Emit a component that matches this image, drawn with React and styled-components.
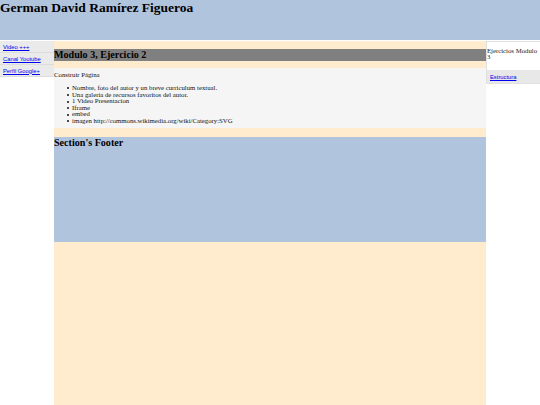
import React from 'react';
import styled, { createGlobalStyle } from 'styled-components';

const GlobalStyle = createGlobalStyle`
  html, body {
    margin: 0;
    padding: 0;
    background: #ffffff;
    font-family: "Liberation Serif", "Times New Roman", serif;
    color: #000;
  }
`;

const Header = styled.header`
  height: 40px;
  background-color: #b0c4de;
  margin-bottom: 1px;

  h1 {
    margin: 0;
    font-size: 13.5px;
    line-height: 16px;
    font-weight: bold;
  }
`;

const Layout = styled.div`
  display: flex;
  align-items: flex-start;
`;

const Nav = styled.nav`
  width: 54px;
  flex-shrink: 0;
  background-color: #eaeaea;
  display: flex;
  flex-direction: column;
`;

const NavItem = styled.div`
  height: 11px;
  display: flex;
  align-items: center;
  padding-left: 3px;
  border-bottom: 1px solid #dcdcdc;
  font-family: "Liberation Sans", Arial, sans-serif;
  font-size: 5.8px;

  a {
    color: #0000ee;
  }
`;

const Main = styled.main`
  width: 432px;
  flex-shrink: 0;
  min-height: 364px;
  background-color: #ffebcd;
  padding: 1px 0 0;
  box-sizing: border-box;
`;

const SectionTitle = styled.h2`
  margin: 7px 0;
  background-color: #808080;
  font-size: 10.1px;
  line-height: 11.5px;
`;

const Article = styled.article`
  background-color: #f5f5f5;
  font-size: 6.75px;
  line-height: 7.7px;
  color: #111;
  padding: 1px 0 0;

  p {
    margin: 2px 0 0;
  }

  ul {
    margin: 6.75px 0 0;
    padding: 0 0 3px 18px;
    list-style: none;
  }

  li {
    position: relative;
    line-height: 6.6px;
  }

  li::before {
    content: '';
    position: absolute;
    left: -5px;
    top: 2.4px;
    width: 2px;
    height: 2px;
    border-radius: 50%;
    background: #111;
  }
`;

const SectionFooter = styled.footer`
  margin-top: 9px;
  height: 105px;
  background-color: #b0c4de;

  h3 {
    margin: 0;
    font-size: 10.1px;
    line-height: 11.5px;
  }
`;

const Aside = styled.aside`
  width: 54px;
  flex-shrink: 0;
  border: 1px solid #e0e0e0;
  border-right: none;
  box-sizing: border-box;
  background: #ffffff;
`;

const AsideTitle = styled.div`
  height: 28px;
  padding-top: 6px;
  box-sizing: border-box;
  font-size: 6.75px;
  line-height: 6px;
  color: #222;
`;

const AsideLink = styled.div`
  height: 13px;
  display: flex;
  align-items: center;
  padding-left: 3px;
  background-color: #e8e8e8;
  font-family: "Liberation Sans", Arial, sans-serif;
  font-size: 5.8px;

  a {
    color: #0000ee;
  }
`;

const links = ['Video +++', 'Canal Youtube', 'Perfil Google+'];

const tasks = [
  'Nombre, foto del autor y un breve curriculum textual.',
  'Una galeria de recursos favoritos del autor.',
  '1 Video Presentacion',
  'Iframe',
  'embed',
  'imagen http://commons.wikimedia.org/wiki/Category:SVG',
];

export default function App() {
  return (
    <>
      <GlobalStyle />
      <Header>
        <h1>German David Ramírez Figueroa</h1>
      </Header>
      <Layout>
        <Nav>
          {links.map((l) => (
            <NavItem key={l}>
              <a href="#">{l}</a>
            </NavItem>
          ))}
        </Nav>
        <Main>
          <SectionTitle>Modulo 3, Ejercicio 2</SectionTitle>
          <Article>
            <p>Construir Página</p>
            <ul>
              {tasks.map((t) => (
                <li key={t}>{t}</li>
              ))}
            </ul>
          </Article>
          <SectionFooter>
            <h3>Section's Footer</h3>
          </SectionFooter>
        </Main>
        <Aside>
          <AsideTitle>Ejercicios Modulo 3</AsideTitle>
          <AsideLink>
            <a href="#">Estructura</a>
          </AsideLink>
        </Aside>
      </Layout>
    </>
  );
}
